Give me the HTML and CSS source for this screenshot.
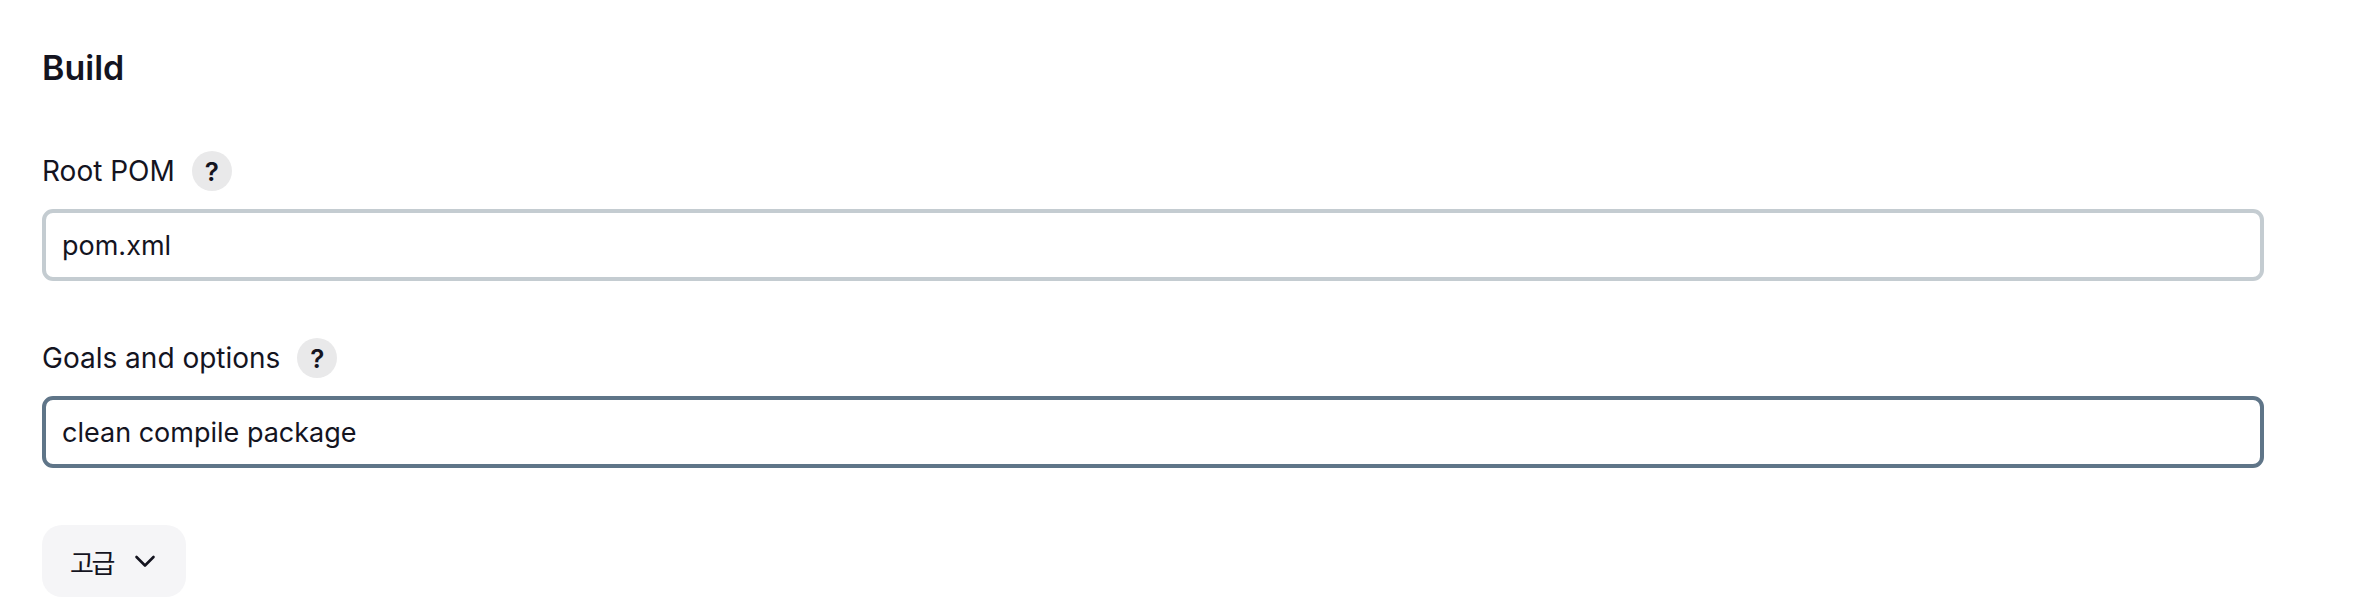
FILE: index.html
```html
<!DOCTYPE html>
<html lang="ko">
<head>
  <title>Build</title>
  <meta charset="utf-8">
  <meta name="viewport" content="width=device-width, initial-scale=1">
  <link rel="stylesheet" href="styles.css">
</head>
<body>
  <section class="section">
    <h2 class="section__title">Build</h2>

    <div class="field">
      <div class="field__label">
        <span>Root POM</span>
        <button class="help" type="button" aria-label="Root POM 도움말">?</button>
      </div>
      <input class="input" type="text" value="pom.xml">
    </div>

    <div class="field">
      <div class="field__label">
        <span>Goals and options</span>
        <button class="help" type="button" aria-label="Goals and options 도움말">?</button>
      </div>
      <input class="input input--focus" type="text" value="clean compile package">
    </div>

    <button class="advanced" type="button">
      <span class="advanced__text">고급</span>
      <svg xmlns="http://www.w3.org/2000/svg" width="24" height="24" viewBox="0 0 24 24" fill="none">
        <polyline points="3.5,8 12,16.5 20.5,8" stroke="#14141F" stroke-width="2.6" stroke-linecap="round" stroke-linejoin="round"/>
      </svg>
    </button>
  </section>
</body>
</html>
```

FILE: styles.css
```css
*, *::before, *::after {
  margin: 0;
  padding: 0;
  box-sizing: border-box;
}

html {
  color: #14141F;
  font-family: "Inter", "Noto Sans CJK KR", sans-serif;
  font-size: 28px;
}

body {
  background-color: #FFFFFF;
}

.section {
  display: flex;
  flex-direction: column;
  align-items: flex-start;
  width: 2264px;
  padding: 48px 0 0 42px;
}

.section__title {
  font-size: 34px;
  font-weight: 600;
  line-height: 40px;
  margin-bottom: 63px;
}

.field {
  display: flex;
  flex-direction: column;
  width: 100%;
  margin-bottom: 57px;
}

.field__label {
  display: flex;
  align-items: center;
  gap: 17px;
  height: 40px;
  margin-bottom: 18px;
  line-height: 1;
}

.help {
  display: flex;
  align-items: center;
  justify-content: center;
  width: 40px;
  height: 40px;
  border: none;
  border-radius: 50%;
  background-color: #E9E9EA;
  color: #14141F;
  font-family: inherit;
  font-size: 26px;
  font-weight: 600;
  cursor: pointer;
}

.input {
  width: 100%;
  height: 72px;
  padding: 0 16px;
  border: 4px solid #C4CCD1;
  border-radius: 11px;
  color: #14141F;
  font-family: inherit;
  font-size: 27px;
  outline: none;
}

.input--focus {
  border-color: #5F7588;
}

.advanced {
  display: flex;
  align-items: center;
  gap: 20px;
  height: 72px;
  padding: 0 29px 0 28px;
  border: none;
  border-radius: 20px;
  background-color: #F5F5F7;
  color: #14141F;
  font-family: "Noto Sans CJK KR", sans-serif;
  font-size: 26px;
  cursor: pointer;
}

.advanced__text {
  letter-spacing: -2.5px;
}
```
